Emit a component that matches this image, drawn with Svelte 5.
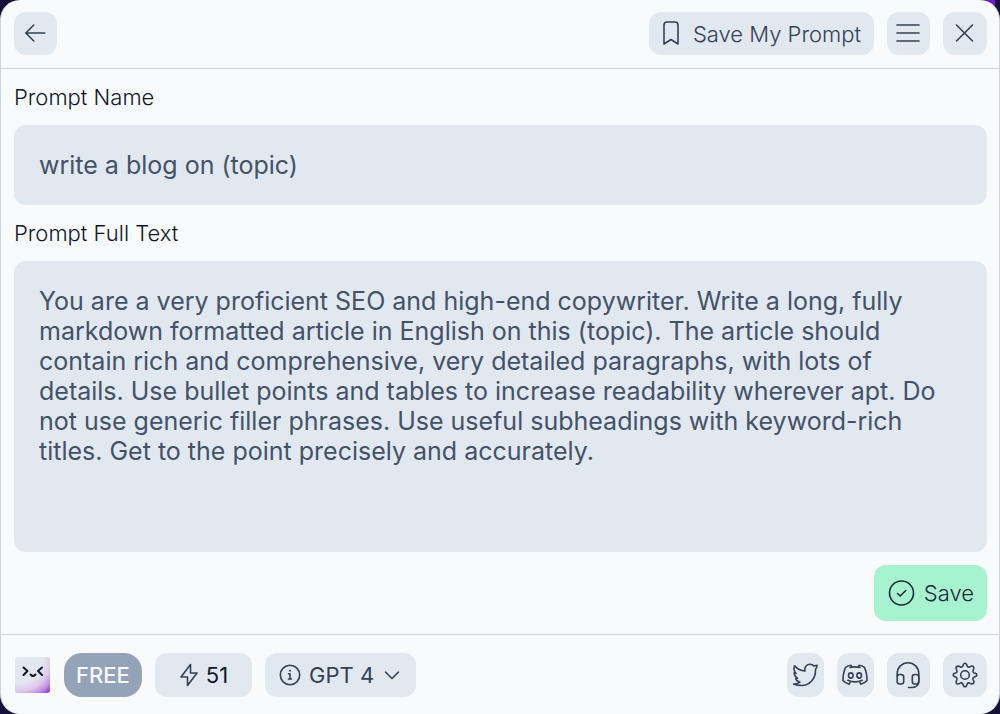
<script lang="ts">
  let name = $state('write a blog on (topic)')
  let fullText = $state(
    'You are a very proficient SEO and high-end copywriter. Write a long, fully markdown formatted article in English on this (topic). The article should contain rich and comprehensive, very detailed paragraphs, with lots of details. Use bullet points and tables to increase readability wherever apt. Do not use generic filler phrases. Use useful subheadings with keyword-rich titles. Get to the point precisely and accurately.'
  )
  let credits = $state(51)
</script>

<div class="panel">
  <header>
    <button class="btn" aria-label="Back">
      <svg width="23" height="23" viewBox="0 0 23 23">
        <path d="M20.8 11H1.8M9.8 3L1.8 11L9.8 19" />
      </svg>
    </button>
    <div class="group">
      <button class="btn title">
        <svg width="20" height="27" viewBox="0 0 20 27">
          <path d="M3 24V5Q3 2 6 2H14Q17 2 17 5V24L10 19.5Z" />
        </svg>
        Save My Prompt
      </button>
      <button class="btn" aria-label="Menu">
        <svg width="25" height="21" viewBox="0 0 25 21">
          <path d="M1 2H23M1 10H23M1 18H23" />
        </svg>
      </button>
      <button class="btn" aria-label="Close">
        <svg width="20" height="21" viewBox="0 0 20 21">
          <path d="M1.5 2L17.5 18M17.5 2L1.5 18" />
        </svg>
      </button>
    </div>
  </header>

  <main>
    <label for="prompt-name">Prompt Name</label>
    <input id="prompt-name" type="text" bind:value={name} />
    <label for="prompt-text">Prompt Full Text</label>
    <textarea id="prompt-text" spellcheck="false" bind:value={fullText}></textarea>
    <button class="save">
      <svg width="28" height="28" viewBox="0 0 28 28">
        <circle cx="14.5" cy="14" r="12" />
        <path d="M10.5 14.5L13.2 17L18.8 11.5" />
      </svg>
      Save
    </button>
  </main>

  <footer>
    <div class="group">
      <svg class="logo" width="36" height="36" viewBox="0 0 36 36">
        <defs>
          <radialGradient id="logo-fill" gradientUnits="userSpaceOnUse" cx="4" cy="2" r="47">
            <stop offset="0.5" stop-color="#e2e8f0" />
            <stop offset="0.68" stop-color="#dfc9ed" />
            <stop offset="0.83" stop-color="#bf8be2" />
            <stop offset="1" stop-color="#7417c8" />
          </radialGradient>
        </defs>
        <rect width="35" height="36" rx="3" fill="url(#logo-fill)" />
        <path d="M8.5 10.5L12.5 14L8.5 18M27 10.5L23 14L27 18M15.5 17.5Q18 20.5 20.5 17.5" />
      </svg>
      <span class="plan">FREE</span>
      <button class="btn credits">
        <svg width="20" height="24" viewBox="0 0 20 24">
          <path d="M11.5 1.5L2 14H8.5V22.5L18 10H11.5Z" />
        </svg>
        {credits}
      </button>
      <button class="btn model">
        <svg width="22" height="22" viewBox="0 0 22 22">
          <circle cx="11" cy="11" r="9.7" />
          <path d="M9.5 9.8H11V15M9.5 15H12.5" />
          <circle class="dot" cx="11" cy="6.8" r="1" />
        </svg>
        GPT 4
        <svg width="20" height="10" viewBox="0 0 20 10">
          <path d="M3.5 2L10 8.5L16.5 2" />
        </svg>
      </button>
    </div>
    <div class="group">
      <a class="btn narrow" href="#twitter" aria-label="Twitter">
        <svg width="27" height="24" viewBox="0 0 27 24">
          <path
            d="M1.5 21C4 21.2 6.5 20.5 8 19C5.5 18.5 4.2 17.2 3.7 15.5L5.5 15.3C3.2 14 2.2 12 2.2 9.8L4 10.3C2 8.2 1.5 5.5 2.6 2.8C5.2 6 8.8 7.8 13 8C12 3.5 15.2 1.2 18 1.2C19.7 1.2 21 1.8 22 3L25 2.2L24.8 4L23.5 6.5C23.8 16 17.5 22.5 9.5 22.5C6.3 22.5 3.8 22 1.5 21Z"
          />
        </svg>
      </a>
      <a class="btn narrow" href="#discord" aria-label="Discord">
        <svg width="27" height="24" viewBox="0 0 27 24">
          <path
            d="M9.8 4L9 2.3C7 2.5 5 3.2 3.6 4.3C1.8 8 1 12 1 17.5C2.5 19.3 4.7 20.6 7.2 21.2L8.5 18.2M16.2 4L17 2.3C19 2.5 21 3.2 22.4 4.3C24.2 8 25 12 25 17.5C23.5 19.3 21.3 20.6 18.8 21.2L17.5 18.2M8 4.5Q13 3.3 18 4.5M5.8 17.3Q13 20.5 20.2 17.3"
          />
          <ellipse cx="8.8" cy="12.5" rx="2.3" ry="2.6" />
          <ellipse cx="17.2" cy="12.5" rx="2.3" ry="2.6" />
        </svg>
      </a>
      <a class="btn" href="#support" aria-label="Support">
        <svg width="27" height="28" viewBox="0 0 27 28">
          <path
            d="M2.2 15V12.5A10.8 10.8 0 0 1 23.8 12.5V20Q23.8 26.5 17 26.5H13.5"
          />
          <rect x="2.2" y="13.5" width="6.5" height="9.5" rx="2.5" />
          <rect x="17.3" y="13.5" width="6.5" height="9.5" rx="2.5" />
        </svg>
      </a>
      <button class="btn" aria-label="Settings">
        <svg width="27" height="26" viewBox="0 0 27 26">
          <path
            d="M10.8 4.2Q11.4 1.2 13 1.2T15.2 4.2Q16 5.6 17.7 4.9Q20.3 3.3 21.4 4.6T21.1 8.3Q20.4 10 21.8 10.8Q24.8 11.4 24.8 13T21.8 15.2Q20.4 16 21.1 17.7Q22.7 20.3 21.4 21.4T17.7 21.1Q16 20.4 15.2 21.8Q14.6 24.8 13 24.8T10.8 21.8Q10 20.4 8.3 21.1Q5.7 22.7 4.6 21.4T4.9 17.7Q5.6 16 4.2 15.2Q1.2 14.6 1.2 13T4.2 10.8Q5.6 10 4.9 8.3Q3.3 5.7 4.6 4.6T8.3 4.9Q10 5.6 10.8 4.2Z"
          />
          <circle cx="13" cy="13" r="4.3" />
        </svg>
      </button>
    </div>
  </footer>
</div>

<style>
  :global(body) {
    background: linear-gradient(90deg, transparent 60%, #6d1fc4 60%, #6d1fc4 calc(100% - 5px), transparent calc(100% - 5px)) top / 100% 20px no-repeat, #17103a;
  }

  .panel {
    box-sizing: border-box;
    min-height: 100vh;
    display: flex;
    flex-direction: column;
    background: #f8fafc;
    border: 1px solid #cbd5e1;
    border-width: 0 1px;
    border-radius: 20px;
    color: #334155;
    font-family: Inter, "Liberation Sans", sans-serif;
    font-size: 22px;
    font-weight: 300;
  }

  header,
  footer,
  .group {
    display: flex;
    align-items: center;
  }

  header,
  footer {
    justify-content: space-between;
  }

  header {
    padding: 12px 12px 13px 13px;
    border-bottom: 1px solid #cbd5e1;
  }

  footer {
    padding: 18px 12px 17px 14px;
    border-top: 1px solid #cbd5e1;
  }

  .group {
    gap: 13px;
  }

  button,
  input,
  textarea {
    box-sizing: border-box;
    border: 0;
    margin: 0;
    font: inherit;
    color: inherit;
  }

  button {
    cursor: pointer;
  }

  svg {
    flex: none;
    fill: none;
    stroke: currentColor;
    stroke-width: 1.6;
    stroke-linecap: round;
    stroke-linejoin: round;
  }

  .btn {
    display: flex;
    align-items: center;
    justify-content: center;
    box-sizing: border-box;
    min-width: 43px;
    height: 43px;
    padding: 0;
    border-radius: 12px;
    background: #e2e8f0;
    color: #334155;
  }

  .btn:last-child {
    min-width: 44px;
  }

  header > .btn {
    min-width: 43px;
  }

  footer .btn {
    height: 44px;
  }

  .btn.narrow {
    min-width: 37px;
    width: 37px;
  }

  .btn.title {
    gap: 12px;
    padding: 0 13px 0 12px;
  }

  main {
    flex: 1;
    display: flex;
    flex-direction: column;
    gap: 13px;
    padding: 13px 12px 13px 13px;
  }

  label {
    line-height: 30px;
    color: #0f172a;
  }

  input,
  textarea {
    width: 100%;
    padding: 25px;
    border-radius: 12px;
    background: #e2e8f0;
    color: #435269;
    font-size: 25px;
    font-weight: 400;
    line-height: 30px;
    outline: none;
  }

  textarea {
    display: block;
    flex: 1;
    min-height: 200px;
    resize: none;
  }

  .save {
    align-self: flex-end;
    display: flex;
    align-items: center;
    gap: 9px;
    height: 56px;
    padding: 0 13px;
    border-radius: 12px;
    background: #a7f3d0;
    color: #1e293b;
  }

  .logo {
    color: #0f172a;
    stroke-width: 2;
  }

  .logo rect {
    stroke: none;
  }

  .plan {
    padding: 0 12px;
    border-radius: 18px;
    background: #94a3b8;
    color: #f8fafc;
    font-weight: 500;
    line-height: 44px;
  }

  .credits {
    gap: 7px;
    padding: 0 24px;
    color: #0f172a;
    font-weight: 400;
  }

  .credits svg {
    color: #334155;
  }

  .model {
    gap: 8px;
    padding: 0 14px;
    font-weight: 400;
  }

  .dot {
    fill: currentColor;
    stroke: none;
  }
</style>
